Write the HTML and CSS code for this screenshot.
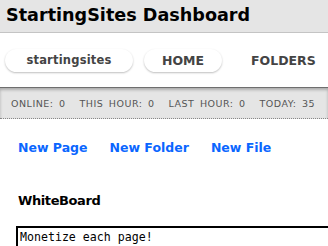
FILE: index.html
```html
<!DOCTYPE html>
<html lang="en">
<head>
    <meta charset="UTF-8">
    <title>StartingSites Dashboard</title>
    <link rel="stylesheet" href="styles.css">
</head>
<body>
    <div id="header">StartingSites Dashboard</div>
    <div id="nav">
        <a class="nav-item pill" href="#">startingsites</a>
        <a class="nav-item pill" href="#">HOME</a>
        <a class="nav-item" href="#">FOLDERS</a>
    </div>
    <div id="stats">
        <span>ONLINE: 0</span>
        <span>THIS HOUR: 0</span>
        <span>LAST HOUR: 0</span>
        <span>TODAY: 35</span>
    </div>
    <div id="actions">
        <a href="#">New Page</a>
        <a href="#">New Folder</a>
        <a href="#">New File</a>
    </div>
    <div id="whiteboard">
        <h3>WhiteBoard</h3>
        <textarea id="board">Monetize each page!</textarea>
    </div>
</body>
</html>
```

FILE: styles.css
```css
body {
    margin: 0;
    padding: 0;
    font-family: "DejaVu Sans", Verdana, sans-serif;
    background-color: #fff;
    overflow: hidden;
}
#header {
    height: 32px;
    padding-left: 6px;
    background-color: #e5e5e5;
    border-bottom: 1px solid #c4c4c4;
    font-size: 17.6px;
    font-weight: bold;
    line-height: 30px;
    color: #000;
    white-space: nowrap;
}
#nav {
    height: 54px;
    display: flex;
    align-items: center;
    gap: 11px;
    padding: 0 5px;
    white-space: nowrap;
}
.nav-item {
    color: #444;
    font-size: 12.5px;
    font-weight: bold;
    text-decoration: none;
    padding: 4px 0;
    text-align: center;
}
.pill {
    background-color: #fff;
    border-radius: 12px;
    box-shadow: 0 1px 2px rgba(0, 0, 0, 0.25);
    width: 128px;
    height: 15px;
    padding: 4px 0 4px;
}
.pill:first-child {
    font-size: 11.5px;
    letter-spacing: 0.2px;
}
.pill + .pill {
    width: 78px;
}
.nav-item:last-child {
    margin-left: 18px;
}
#stats {
    height: 30px;
    background-color: #e5e5e5;
    border-top: 1px solid #6e6e6e;
    box-shadow: inset 0 2px 3px rgba(0, 0, 0, 0.25);
    border-bottom: 1px dotted #888;
    display: flex;
    align-items: center;
    padding-left: 11px;
    gap: 14px;
    font-size: 9.5px;
    letter-spacing: 0.5px;
    word-spacing: 2px;
    color: #555;
    white-space: nowrap;
}
#actions {
    display: flex;
    gap: 22px;
    padding: 21px 18px 0;
}
#actions a {
    color: #0a66ff;
    font-size: 12.5px;
    font-weight: bold;
    text-decoration: none;
}
#whiteboard {
    padding: 0 0 0 16px;
}
#whiteboard h3 {
    margin: 38px 0 18px 2px;
    font-size: 13px;
    font-weight: 900;
    letter-spacing: -0.4px;
}
#board {
    display: block;
    width: 320px;
    height: 60px;
    margin: 0;
    padding: 2px 2px;
    font-family: "DejaVu Sans Mono", monospace;
    font-size: 11.6px;
    border: 2px inset #000;
    border-right: none;
    resize: none;
}
```
